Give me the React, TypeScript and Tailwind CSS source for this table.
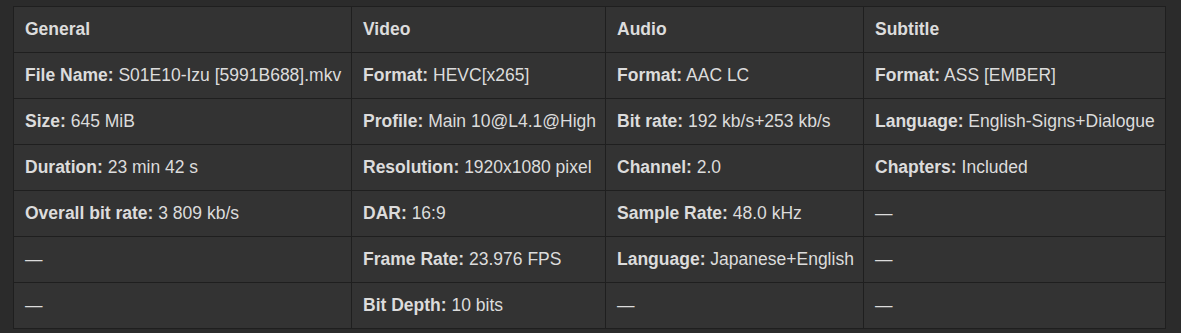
import React from "react";

type Cell = { label?: string; value?: string } | null;

const headers = ["General", "Video", "Audio", "Subtitle"];

const rows: Cell[][] = [
  [
    { label: "File Name:", value: "S01E10-Izu [5991B688].mkv" },
    { label: "Format:", value: "HEVC[x265]" },
    { label: "Format:", value: "AAC LC" },
    { label: "Format:", value: "ASS [EMBER]" },
  ],
  [
    { label: "Size:", value: "645 MiB" },
    { label: "Profile:", value: "Main 10@L4.1@High" },
    { label: "Bit rate:", value: "192 kb/s+253 kb/s" },
    { label: "Language:", value: "English-Signs+Dialogue" },
  ],
  [
    { label: "Duration:", value: "23 min 42 s" },
    { label: "Resolution:", value: "1920x1080 pixel" },
    { label: "Channel:", value: "2.0" },
    { label: "Chapters:", value: "Included" },
  ],
  [
    { label: "Overall bit rate:", value: "3 809 kb/s" },
    { label: "DAR:", value: "16:9" },
    { label: "Sample Rate:", value: "48.0 kHz" },
    null,
  ],
  [
    null,
    { label: "Frame Rate:", value: "23.976 FPS" },
    { label: "Language:", value: "Japanese+English" },
    null,
  ],
  [null, { label: "Bit Depth:", value: "10 bits" }, null, null],
];

export default function App() {
  return (
    <div
      className="min-h-[333px] bg-[#2b2b2b] pt-[6px] pl-[13px] text-[#dcdcdc] text-[17.5px]"
      style={{ fontFamily: '"Liberation Sans", Arial, sans-serif' }}
    >
      <table className="table-fixed border-collapse w-[1152px] bg-[#333333] border border-[#1f1f1f]">
        <colgroup>
          <col className="w-[338px]" />
          <col className="w-[254px]" />
          <col className="w-[258px]" />
          <col className="w-[302px]" />
        </colgroup>
        <thead>
          <tr>
            {headers.map((h) => (
              <th
                key={h}
                className="h-[46px] border border-[#1f1f1f] px-[11px] text-left font-bold leading-none"
              >
                {h}
              </th>
            ))}
          </tr>
        </thead>
        <tbody>
          {rows.map((row, i) => (
            <tr key={i}>
              {row.map((cell, j) => (
                <td
                  key={j}
                  className="h-[46px] border border-[#1f1f1f] px-[11px] whitespace-nowrap leading-none"
                >
                  {cell ? (
                    <>
                      <span className="font-bold">{cell.label}</span>{" "}
                      <span>{cell.value}</span>
                    </>
                  ) : (
                    "—"
                  )}
                </td>
              ))}
            </tr>
          ))}
        </tbody>
      </table>
    </div>
  );
}
